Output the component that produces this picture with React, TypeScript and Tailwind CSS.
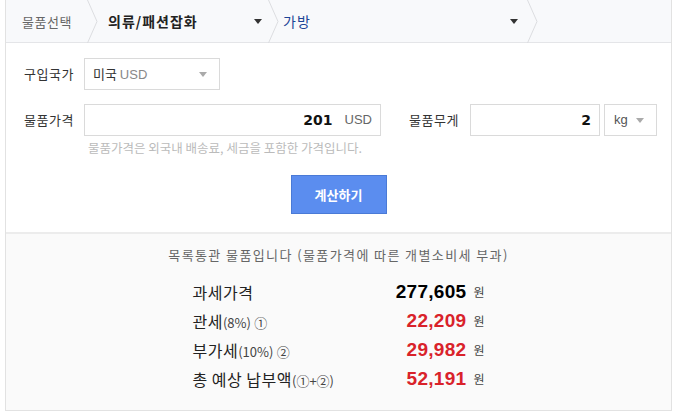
import React from "react";

const kr = { fontFamily: '"Noto Sans CJK KR", "Noto Sans", sans-serif' };
const num = { fontFamily: '"DejaVu Sans", "Noto Sans CJK KR", sans-serif' };
const big = { fontFamily: '"Liberation Sans", "Noto Sans CJK KR", sans-serif' };

function Chevron() {
  return (
    <svg width="11" height="43" viewBox="0 0 11 43" className="shrink-0">
      <path d="M0.5 0 L10 21.5 L0.5 43" fill="none" stroke="#dcdde0" strokeWidth="1" />
    </svg>
  );
}

function Caret({ color = "#333" }: { color?: string }) {
  return (
    <svg width="8" height="5" viewBox="0 0 8 5" className="shrink-0">
      <path d="M0 0 H8 L4 5 Z" fill={color} />
    </svg>
  );
}

const rows = [
  { label: "과세가격", sub: "", mark: "", value: "277,605", red: false },
  { label: "관세", sub: "(8%)", mark: " ①", value: "22,209", red: true },
  { label: "부가세", sub: "(10%)", mark: " ②", value: "29,982", red: true },
  { label: "총 예상 납부액", sub: "(①+②)", mark: "", value: "52,191", red: true },
];

export default function App() {
  return (
    <div className="w-[675px] h-[415px] bg-white" style={kr}>
      <div className="ml-[5px] w-[667px] h-[411px] border-x border-b border-[#e2e2e2] flex flex-col">
        {/* breadcrumb */}
        <div className="h-[43px] bg-[#f8f9fb] border-b border-[#e4e5e8] flex items-center leading-none">
          <div className="w-[81px] pl-[16px] text-[13px] tracking-[0.5px] text-[#666]">물품선택</div>
          <Chevron />
          <div className="w-[170px] pl-[10px] pr-[6px] flex items-center justify-between font-bold text-[14px] tracking-[1px] text-[#222]">
            <span>의류/패션잡화</span>
            <Caret />
          </div>
          <Chevron />
          <div className="w-[248px] pl-[4px] pr-[9px] flex items-center justify-between text-[14px] tracking-[1px] text-[#1c4597]">
            <span>가방</span>
            <Caret />
          </div>
          <Chevron />
        </div>

        {/* form */}
        <div className="h-[189px] pl-[18px] pt-[15px] text-[13px] text-[#333]">
          <div className="flex items-center h-[32px]">
            <div className="w-[60px] tracking-[0.5px]">구입국가</div>
            <div className="w-[136px] h-[32px] border border-[#dadada] flex items-center justify-between pl-[8px] pr-[12px]">
              <span>
                미국 <span className="text-[#888]" style={big}>USD</span>
              </span>
              <Caret color="#aaa" />
            </div>
          </div>
          <div className="flex items-center h-[32px] mt-[14px]">
            <div className="w-[60px] tracking-[0.5px]">물품가격</div>
            <div className="w-[297px] h-[32px] border border-[#dadada] flex items-center justify-end pr-[8px]">
              <span className="font-bold text-[14px] text-[#111]" style={num}>201</span>
              <span className="ml-[12px] text-[#666]" style={big}>USD</span>
            </div>
            <div className="w-[61px] ml-[28px] tracking-[0.5px]">물품무게</div>
            <div className="w-[130px] h-[32px] border border-[#dadada] flex items-center justify-end pr-[8px]">
              <span className="font-bold text-[14px] text-[#111]" style={num}>2</span>
            </div>
            <div className="w-[53px] h-[32px] ml-[4px] border border-[#dadada] flex items-center justify-between pl-[9px] pr-[12px]">
              <span className="text-[#555]" style={big}>kg</span>
              <Caret color="#aaa" />
            </div>
          </div>
          <div className="ml-[64px] mt-[5px] text-[12.5px] text-[#bbbbbb] leading-[14px]">
            물품가격은 외국내 배송료, 세금을 포함한 가격입니다.
          </div>
          <div className="flex justify-center pr-[18px] mt-[20px]">
            <button className="w-[96px] h-[39px] bg-[#5b8def] border border-[#4a7ad6] text-white font-bold text-[13px]">
              계산하기
            </button>
          </div>
        </div>

        {/* result */}
        <div className="flex-1 bg-[#fafafa] border-t-2 border-[#ececec]">
          <div className="mt-[12px] text-center text-[13px] text-[#666] tracking-[1.4px] leading-[18px]">
            목록통관 물품입니다 (물품가격에 따른 개별소비세 부과)
          </div>
          <div className="w-[292px] mx-auto mt-[13px] flex flex-col">
            {rows.map((r) => (
              <div key={r.label} className="h-[29px] flex items-center">
                <div className="flex-1 text-[16px] tracking-[0.5px] text-[#222] leading-none">
                  {r.label}
                  {r.sub && <span className="text-[13px] tracking-normal text-[#444]">{r.sub}</span>}
                  {r.mark && <span className="text-[13px] text-[#444]">{r.mark}</span>}
                </div>
                <div
                  className={`font-bold text-[19px] tracking-[0.3px] leading-none ${r.red ? "text-[#d9222a]" : "text-black"}`}
                  style={big}
                >
                  {r.value}
                </div>
                <div className="ml-[7px] text-[12px] text-[#444] leading-none">원</div>
              </div>
            ))}
          </div>
        </div>
      </div>
    </div>
  );
}
